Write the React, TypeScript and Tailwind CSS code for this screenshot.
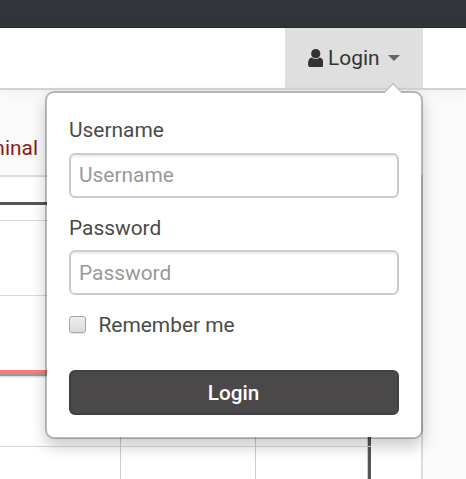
import { useState } from "react";

const BOARD_COLUMNS = ["w-[121px]", "w-[135px]", "w-[112px]"];

function UserIcon() {
  return (
    <svg viewBox="0 128 1280 1536" className="h-[18.5px] w-[15.5px] shrink-0" fill="currentColor">
      <path d="M1280 1399q0 109-62.500 187t-150.500 78h-854q-88 0-150.500-78t-62.500-187q0-85 8.500-160.500t31.500-152 58.500-131 94-89 134.500-34.500q131 128 313 128t313-128q76 0 134.500 34.500t94 89 58.500 131 31.500 152 8.500 160.500zm-256-887q0 159-112.500 271.500t-271.500 112.500-271.500-112.500-112.500-271.500 112.500-271.500 271.500-112.500 271.500 112.500 112.500 271.500z" />
    </svg>
  );
}

function Field({ label, type, className }: { label: string; type: string; className: string }) {
  return (
    <label className="block">
      <span className="block h-[30px] leading-[30px]">{label}</span>
      <input
        type={type}
        placeholder={label}
        className={`mt-[7.6px] block h-[45px] w-full rounded-md border-2 border-[#ccc] bg-white px-2 shadow-[inset_0_2px_2px_rgba(0,0,0,0.075)] outline-none placeholder:text-[#999] ${className}`}
      />
    </label>
  );
}

function LoginMenu() {
  return (
    <div className="absolute top-[63px] right-0 z-10 w-[378px] rounded-[9px] border-2 border-black/25 bg-white bg-clip-padding px-[22px] pt-[22px] pb-[22px] shadow-[0_8px_15px_rgba(0,0,0,0.2)]">
      {/* Caret */}
      <svg viewBox="0 0 20 10" className="absolute -top-[10px] right-[18px] h-[10px] w-5">
        <path d="M0 10 10 0l10 10z" fill="#b8b8b8" />
        <path d="M1.500 10 10 1.500l8.500 8.500z" fill="#fff" />
      </svg>

      <form onSubmit={(e) => e.preventDefault()}>
        <div className="space-y-[15.2px]">
          <Field label="Username" type="text" className="pb-px" />
          <Field label="Password" type="password" className="pt-px" />
        </div>
        <label className="mt-[14.6px] flex h-[30px] items-center gap-[12.5px]">
          <input
            type="checkbox"
            className="h-[17px] w-[17px] appearance-none rounded-[3px] border border-[#a6a6a6] bg-linear-to-b from-[#eee] to-[#dcdcdc] shadow-[0_1px_1px_rgba(0,0,0,0.1)]"
          />
          <span>Remember me</span>
        </label>
        <button
          type="submit"
          className="mt-[30px] block h-[45px] w-full rounded-md border-2 border-[#3f4041] bg-[#4b4849] pt-px pr-px text-center text-[20.7px] font-medium text-white"
        >
          Login
        </button>
      </form>
    </div>
  );
}

function Header() {
  const [open, setOpen] = useState(true);

  return (
    <header className="relative z-10 flex h-[62px] justify-end border-b-2 border-[#d2d2d2] bg-white pr-[43px] shadow-[0_1px_12px_rgba(0,0,0,0.06)]">
      <div className="relative w-[138px]">
        <button
          type="button"
          onClick={() => setOpen(!open)}
          className="flex h-full w-full items-center bg-[#dfdfdf] pl-[22.5px] text-[#333]"
        >
          <UserIcon />
          <span className="ml-[5px]">Login</span>
          <svg viewBox="0 0 12 6" className="ml-2 h-1.5 w-3" fill="#666">
            <path d="M0 0h12L6 6z" />
          </svg>
        </button>
        {open && <LoginMenu />}
      </div>
    </header>
  );
}

function BoardRow({ className }: { className: string }) {
  return (
    <div className={`flex ${className}`}>
      {BOARD_COLUMNS.map((width) => (
        <div key={width} className={`${width} shrink-0 border-r border-[#ccc] last:border-r-0`} />
      ))}
      <div className="w-[3px] shrink-0 bg-[#555]" />
    </div>
  );
}

function Board() {
  return (
    <div className="flex h-[304px] w-[423px] flex-col border-t-2 border-r-2 border-[#ddd] bg-white">
      <div className="h-[25px] shrink-0" />
      <div className="h-[3px] w-[371px] shrink-0 bg-[#555]" />
      <BoardRow className="h-4 w-[371px] border-b border-[#d8d8d8]" />
      <BoardRow className="h-[75px] w-[371px] border-b border-[#d8d8d8]" />
      <BoardRow className="h-[74px] w-[371px]" />
      <div className="h-1 w-[371px] shrink-0 bg-[#ff7b7b]" />
      <div className="h-0.5 w-[371px] shrink-0 bg-[#999] shadow-[0_1px_2px_rgba(0,0,0,0.2)]" />
      <BoardRow className="h-[71px] w-[371px] border-b border-[#d8d8d8]" />
      <BoardRow className="w-[371px] flex-1" />
    </div>
  );
}

export default function App() {
  return (
    <div className="h-[479px] w-[466px] overflow-hidden bg-[#fafafa] font-[Roboto,sans-serif] text-[20.9px] leading-[30px] text-[#4a4a4a]">
      <div className="h-7 border-b border-[#2a2d30] bg-[#313539]" />
      <Header />
      <div className="flex h-[85px] items-end pb-[12px]">
        <a href="#" className="flex w-[38px] justify-end text-[#8b1a1a]">
          Terminal
        </a>
      </div>
      <Board />
    </div>
  );
}
